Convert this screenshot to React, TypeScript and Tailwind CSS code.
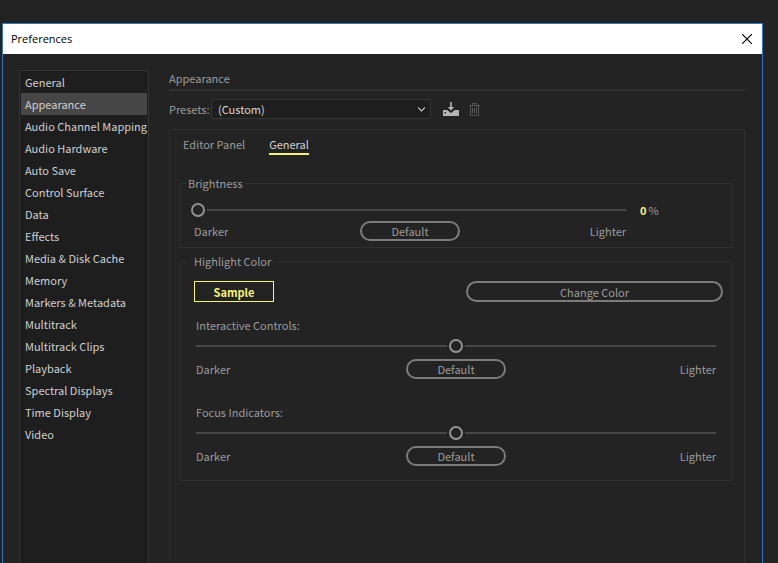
import { useState } from 'react'
import clsx from 'clsx'

const categories = [
  'General',
  'Appearance',
  'Audio Channel Mapping',
  'Audio Hardware',
  'Auto Save',
  'Control Surface',
  'Data',
  'Effects',
  'Media & Disk Cache',
  'Memory',
  'Markers & Metadata',
  'Multitrack',
  'Multitrack Clips',
  'Playback',
  'Spectral Displays',
  'Time Display',
  'Video',
]

const tabs = ['Editor Panel', 'General']

type SliderProps = {
  id: string
  label?: string
  value: number
  onChange: (value: number) => void
}

function Slider({ id, label, value, onChange }: SliderProps) {
  return (
    <input
      id={id}
      aria-label={label}
      type="range"
      min="0"
      max="100"
      value={value}
      onChange={(event) => onChange(Number(event.target.value))}
      className="block h-3.5 w-full min-w-0 appearance-none bg-transparent [&::-webkit-slider-runnable-track]:h-0.5 [&::-webkit-slider-runnable-track]:bg-[#474747] [&::-webkit-slider-thumb]:-mt-1.5 [&::-webkit-slider-thumb]:size-3.5 [&::-webkit-slider-thumb]:appearance-none [&::-webkit-slider-thumb]:rounded-full [&::-webkit-slider-thumb]:border-2 [&::-webkit-slider-thumb]:border-[#929292] [&::-webkit-slider-thumb]:bg-[#232323] [&::-webkit-slider-thumb]:shadow-[0_0_0_2px_#232323]"
    />
  )
}

function SliderLegend({ onReset }: { onReset: () => void }) {
  return (
    <div className="grid grid-cols-[1fr_100px_1fr] items-center">
      <span>Darker</span>
      <button type="button" onClick={onReset} className="h-5 rounded-full border-2 border-[#7c7c7c] leading-4">
        Default
      </button>
      <span className="text-right">Lighter</span>
    </div>
  )
}

function SaveIcon() {
  return (
    <svg width="16" height="14" viewBox="0 0 16 14" fill="#b4b4b4">
      <path d="M7.2 0h1.6v5h2.4L8 8.4 4.8 5h2.4z" />
      <path fillRule="evenodd" d="M0 8h4.2L8 11l3.8-3H16v6H0zM1.5 10v1.4H3V10z" />
    </svg>
  )
}

function TrashIcon() {
  return (
    <svg width="11" height="13" viewBox="0 0 11 13" fill="none" stroke="#565656">
      <path d="M0 2.5h11M3.5 2.5v-2h4v2M1.5 2.5v9.9h8V2.5M3.5 4.5v6M5.5 4.5v6M7.5 4.5v6" />
    </svg>
  )
}

export default function App() {
  const [category, setCategory] = useState('Appearance')
  const [tab, setTab] = useState('General')
  const [brightness, setBrightness] = useState(0)
  const [controls, setControls] = useState(50)
  const [focus, setFocus] = useState(50)

  return (
    <div className="flex min-h-screen flex-col bg-[#232323] pt-[23px] pr-[15px] pl-0.5 font-['Noto_Sans_CJK_JP','Noto_Sans',sans-serif] text-[11px] leading-4 text-[#9c9c9c]">
      <div className="flex grow flex-col border border-b-0 border-[#2f78bd]">
        <header className="flex h-[30px] items-center justify-between bg-white pr-2.5 pl-2 font-['Open_Sans',sans-serif] text-black">
          <h1>Preferences</h1>
          <button type="button" aria-label="Close">
            <svg width="10" height="10" viewBox="0 0 10 10" fill="none" stroke="#000" strokeWidth="1.1">
              <path d="M0 0l10 10M10 0L0 10" />
            </svg>
          </button>
        </header>

        <div className="flex grow gap-5 pt-4 pr-[17px] pl-4">
          <nav className="flex w-[130px] shrink-0 flex-col rounded-t-xs border border-b-0 border-[#343434] bg-[#1e1e1e] px-px">
            {categories.map((name) => (
              <button
                key={name}
                type="button"
                onClick={() => setCategory(name)}
                className={clsx(
                  'h-[22px] pl-1 text-left whitespace-nowrap text-[#d0d0d0]',
                  name === category && 'bg-[#464646]',
                )}
              >
                {name}
              </button>
            ))}
          </nav>

          <main className="flex min-w-0 grow flex-col">
            <h2 className="h-[21px] border-b-2 border-[#303030]">Appearance</h2>

            <div className="mt-2 flex h-5 items-center">
              <label htmlFor="presets" className="w-[42px] shrink-0">
                Presets:
              </label>
              <div className="relative w-[220px]">
                <select
                  id="presets"
                  className="block h-5 w-full appearance-none rounded-xs border border-[#343434] bg-[#1e1e1e] pl-1.5 leading-4 text-[#d8d8d8]"
                >
                  <option>(Custom)</option>
                </select>
                <svg className="pointer-events-none absolute top-2 right-1.5" width="7" height="5" viewBox="0 0 7 5" fill="none" stroke="#c4c4c4" strokeWidth="1.2">
                  <path d="M0 .5l3.5 3.5L7 .5" />
                </svg>
              </div>
              <button type="button" aria-label="Save preset" className="ml-3">
                <SaveIcon />
              </button>
              <button type="button" aria-label="Delete preset" className="ml-2.5">
                <TrashIcon />
              </button>
            </div>

            <section className="mt-2.5 grow rounded-t-xs border border-b-0 border-[#303030] pt-1.5 pr-[11px] pl-[9px]">
              <div className="flex gap-6 pl-1">
                {tabs.map((name) => (
                  <button
                    key={name}
                    type="button"
                    onClick={() => setTab(name)}
                    className={clsx(
                      'border-b-2 pb-px',
                      name === tab ? 'border-[#f5f27c] text-[#d0d0d0]' : 'border-transparent',
                    )}
                  >
                    {name}
                  </button>
                ))}
              </div>

              <fieldset className="mt-5 min-w-0 rounded-xs border border-[#303030] pb-1.5">
                <legend className="ml-1.5 px-0.5">Brightness</legend>
                <div className="flex pt-3 pl-[11px]">
                  <div className="grow">
                    <Slider id="brightness" label="Brightness" value={brightness} onChange={setBrightness} />
                    <div className="mt-1 pl-[3px]">
                      <SliderLegend onReset={() => setBrightness(0)} />
                    </div>
                  </div>
                  <label className="flex h-3.5 w-[106px] shrink-0 items-center gap-0.5 pl-3.5">
                    <input
                      type="text"
                      aria-label="Brightness percent"
                      value={brightness}
                      onChange={(event) => setBrightness(Number(event.target.value) || 0)}
                      className="field-sizing-content bg-transparent font-bold text-[#f5f27c]"
                    />
                    %
                  </label>
                </div>
              </fieldset>

              <fieldset className="mt-[5px] min-w-0 rounded-xs border border-[#303030] pr-[9px] pb-3.5 pl-3.5">
                <legend className="-ml-2 pr-1.5 pl-2">Highlight Color</legend>
                <div className="flex justify-between pt-3">
                  <button type="button" className="h-[21px] w-20 border border-[#f5f27c] leading-4 font-bold text-[#f5f27c]">
                    Sample
                  </button>
                  <button type="button" className="h-[21px] w-[257px] rounded-full border-2 border-[#7c7c7c] leading-4">
                    Change Color
                  </button>
                </div>
                <div className="mt-[15px] grid gap-1.5 pr-[7px] pl-0.5">
                  <label htmlFor="controls">Interactive Controls:</label>
                  <Slider id="controls" value={controls} onChange={setControls} />
                  <SliderLegend onReset={() => setControls(50)} />
                </div>
                <div className="mt-[25px] grid gap-1.5 pr-[7px] pl-0.5">
                  <label htmlFor="focus">Focus Indicators:</label>
                  <Slider id="focus" value={focus} onChange={setFocus} />
                  <SliderLegend onReset={() => setFocus(50)} />
                </div>
              </fieldset>
            </section>
          </main>
        </div>
      </div>
    </div>
  )
}
